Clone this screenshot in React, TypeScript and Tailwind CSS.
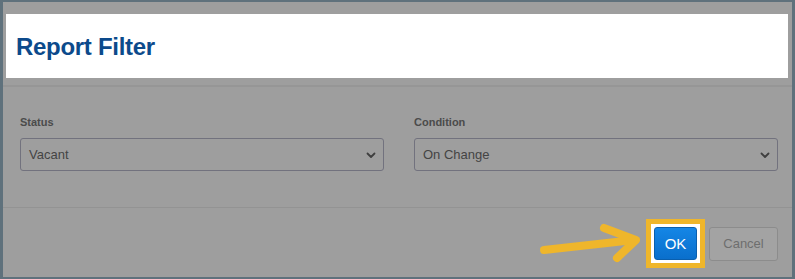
import React from 'react';

function Chevron() {
  return (
    <svg width="10" height="8" viewBox="0 0 10 8" className="shrink-0">
      <path d="M1.5 2.5 L5 6 L8.5 2.5" fill="none" stroke="#3f3f3f" strokeWidth="1.8" strokeLinecap="round" strokeLinejoin="round" />
    </svg>
  );
}

function Field({ label, value }: { label: string; value: string }) {
  return (
    <div className="flex flex-col flex-1">
      <div className="text-[11px] font-semibold text-[#4b4b4b] leading-[14px] mb-[9px]">{label}</div>
      <div className="h-[33px] rounded-[3px] border border-[#72727e] flex items-center justify-between pl-[8px] pr-[7px]">
        <span className="text-[13px] text-[#444444]">{value}</span>
        <Chevron />
      </div>
    </div>
  );
}

export default function App() {
  return (
    <div
      className="w-[795px] h-[279px] bg-[#9e9e9e] border-[#5f717c] border-t-[2px] border-l-[3px] border-r-[3px] border-b-[2px] flex flex-col overflow-hidden"
      style={{ fontFamily: '"Liberation Sans", Arial, sans-serif' }}
    >
      {/* Highlighted header */}
      <div className="mt-[12px] ml-[3px] mr-[4px] h-[64px] bg-white flex items-center pl-[10px]">
        <h1 className="text-[24px] font-bold text-[#0c4a8b] tracking-[-0.3px] mt-[1px]">Report Filter</h1>
      </div>

      <div className="mt-[7px] h-[2px] bg-[#969696]" />

      {/* Fields */}
      <div className="flex gap-[30px] pl-[17px] pr-[14px] pt-[28px] h-[120px]">
        <Field label="Status" value="Vacant" />
        <Field label="Condition" value="On Change" />
      </div>

      <div className="h-[1px] bg-[#939393]" />

      {/* Footer */}
      <div className="relative flex justify-end items-center pr-[14px] pt-[11px] gap-[4px]">
        <svg className="absolute left-[535px] top-[12px]" width="110" height="50" viewBox="0 0 110 50">
          <path d="M6 30 L96 20" fill="none" stroke="#efb62b" strokeWidth="8" strokeLinecap="round" />
          <path d="M66 8 L98 20 L79 38" fill="none" stroke="#efb62b" strokeWidth="8" strokeLinecap="round" strokeLinejoin="round" />
        </svg>
        <div className="w-[59px] h-[49px] bg-[#efb62b] p-[5px] flex">
          <div className="flex-1 bg-white p-[3px] flex">
            <button className="flex-1 rounded-[3px] bg-gradient-to-b from-[#1486e6] to-[#0a6fcc] border border-[#0a5fae] text-white text-[15px] leading-none">
              OK
            </button>
          </div>
        </div>
        <button className="w-[69px] h-[34px] rounded-[3px] border border-[#8c8c8c] bg-[#a3a3a3] text-[13px] text-[#6e6e6e]">
          Cancel
        </button>
      </div>
    </div>
  );
}
